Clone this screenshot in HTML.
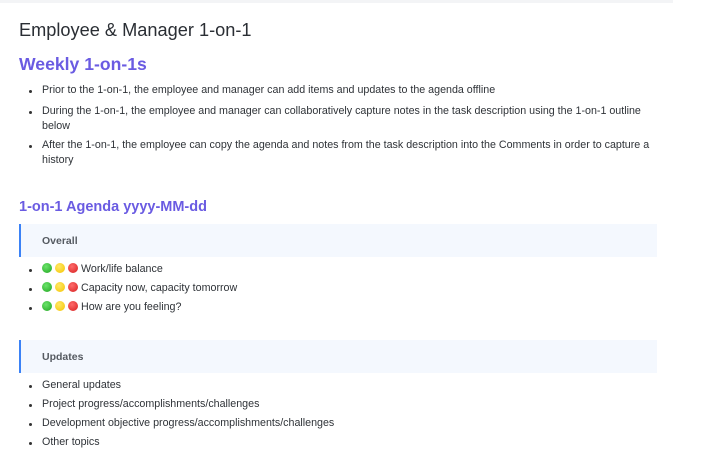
<!DOCTYPE html>
<html><head><meta charset="utf-8"><style>
html,body{margin:0;padding:0;background:#fff;width:703px;height:474px;overflow:hidden;font-family:"Liberation Sans",sans-serif;color:#2a2e34;position:relative}
.topbar{position:absolute;left:0;top:0;width:673px;height:3px;background:#f3f4f6}
.a{position:absolute;white-space:nowrap}
.t{left:19px;top:20px;font-size:18.2px;color:#2a2e34}
.h{left:19px;top:54px;font-size:17.6px;font-weight:bold;color:#6a5be2}
.h2{left:19px;top:199px;font-size:14.5px;font-weight:bold;color:#6a5be2}
.p{font-size:10.7px;color:#2f3338;left:42px}
.b{position:absolute;left:29px;width:3px;height:3px;border-radius:50%;background:#333}
.box{position:absolute;left:19px;width:638px;height:33px;background:#f4f8fe;border-left:2.5px solid #3b82f6;box-sizing:border-box}
.box span{position:absolute;left:21px;top:11px;font-size:10.5px;font-weight:bold;color:#555a61}
.d{display:inline-block;width:10px;height:10px;border-radius:50%;vertical-align:-1px;margin-right:3px}
.g{background:radial-gradient(circle at 40% 35%,#6be36b,#1fa51f)}
.y{background:radial-gradient(circle at 40% 35%,#ffe866,#f5c400)}
.r{background:radial-gradient(circle at 40% 35%,#ff6b6b,#d61f1f);margin-right:3px}
</style></head><body>
<div class="topbar"></div>
<div class="a t">Employee &amp; Manager 1-on-1</div>
<div class="a h">Weekly 1-on-1s</div>

<div class="b" style="top:90px"></div><div class="a p" style="top:84px">Prior to the 1-on-1, the employee and manager can add items and updates to the agenda offline</div>
<div class="b" style="top:111px"></div><div class="a p" style="top:105px">During the 1-on-1, the employee and manager can collaboratively capture notes in the task description using the 1-on-1 outline</div>
<div class="a p" style="top:120px">below</div>
<div class="b" style="top:145px"></div><div class="a p" style="top:139px">After the 1-on-1, the employee can copy the agenda and notes from the task description into the Comments in order to capture a</div>
<div class="a p" style="top:154px">history</div>

<div class="a h2">1-on-1 Agenda yyyy-MM-dd</div>
<div class="box" style="top:224px"><span>Overall</span></div>
<div class="b" style="top:269px"></div><div class="a p" style="top:263px"><i class="d g"></i><i class="d y"></i><i class="d r"></i>Work/life balance</div>
<div class="b" style="top:288px"></div><div class="a p" style="top:282px"><i class="d g"></i><i class="d y"></i><i class="d r"></i>Capacity now, capacity tomorrow</div>
<div class="b" style="top:307px"></div><div class="a p" style="top:301px"><i class="d g"></i><i class="d y"></i><i class="d r"></i>How are you feeling?</div>

<div class="box" style="top:340px"><span>Updates</span></div>
<div class="b" style="top:385px"></div><div class="a p" style="top:379px">General updates</div>
<div class="b" style="top:404px"></div><div class="a p" style="top:398px">Project progress/accomplishments/challenges</div>
<div class="b" style="top:423px"></div><div class="a p" style="top:417px">Development objective progress/accomplishments/challenges</div>
<div class="b" style="top:442px"></div><div class="a p" style="top:436px">Other topics</div>
</body></html>
